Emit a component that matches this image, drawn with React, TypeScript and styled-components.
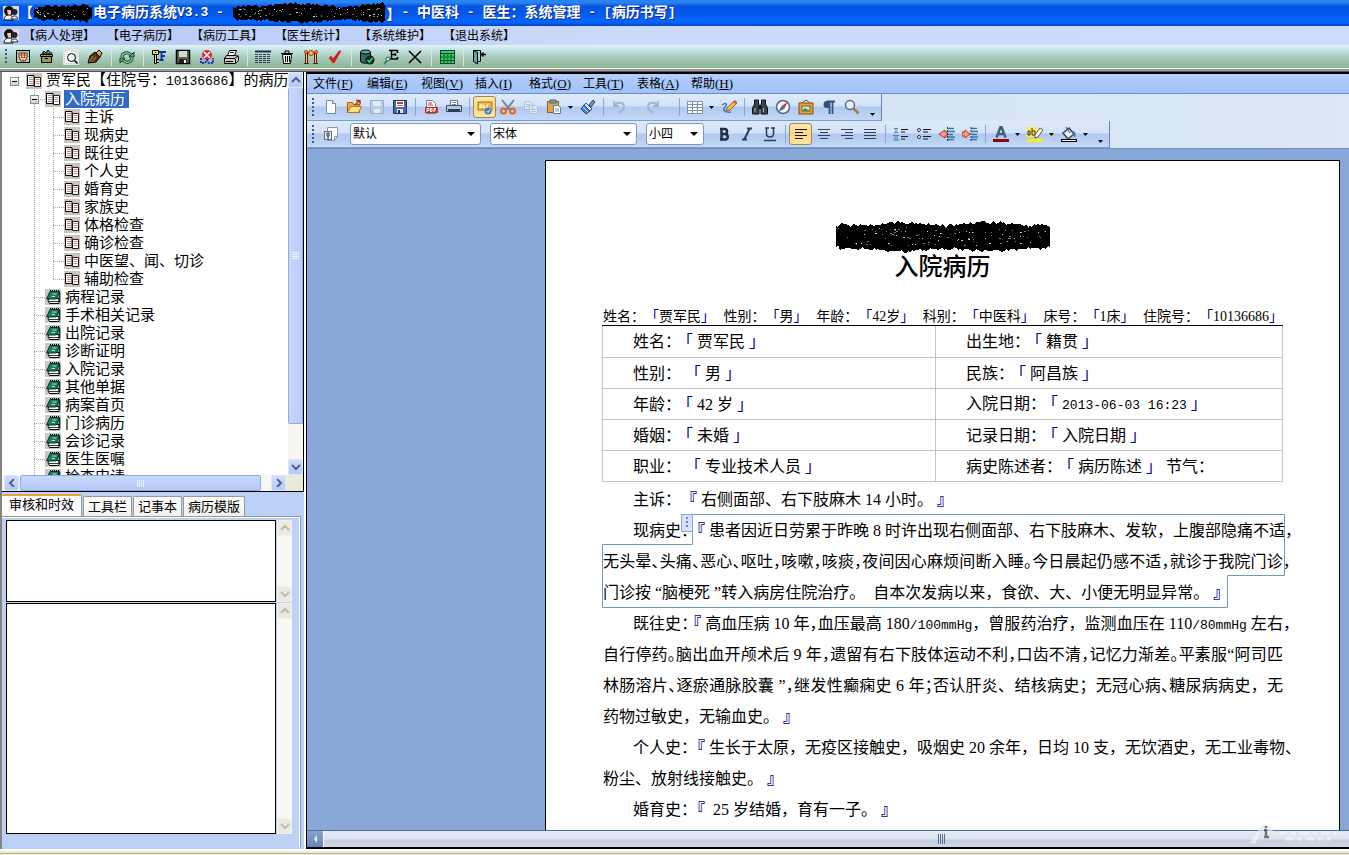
import React from 'react';
import styled, { createGlobalStyle, css } from 'styled-components';

const UI = '"Liberation Serif", "Noto Sans CJK SC", sans-serif';
const MONO = '"Liberation Mono", "Noto Sans CJK SC", monospace';

const Global = createGlobalStyle`
  * { box-sizing: border-box; }
  html, body { margin: 0; height: 100%; overflow: hidden; }
  body { font-family: ${UI}; font-size: 12px; color: #000; background: #bcd1f5; }
  button, select { font-family: inherit; color: inherit; }
  button { border: 0; padding: 0; background: none; cursor: default; }
  svg { display: block; flex: none; }
`;

const Shell = styled.div`
  height: 100vh;
  display: flex;
  flex-direction: column;
`;

/* ---------- title bar and main menu ---------- */

const TitleBar = styled.header`
  flex: none;
  height: 26px;
  padding-left: 3px;
  display: flex;
  align-items: center;
  color: #fff;
  font-size: 14px;
  font-weight: 700;
  white-space: pre;
  line-height: 20px;
  text-shadow: 1px 1px 0 #0a2a80;
  background: linear-gradient(#2a86f4 0, #2a80f0 3px, #0654e4 6px, #0458ea 13px, #0666ff 20px, #0562f8 23px, #0340c0 26px);
`;

const Latin = styled.span`
  font-family: ${MONO};
  font-size: 13px;
`;

const Half = styled.span<{ $ink?: string; $bold?: boolean }>`
  font-family: "Noto Sans CJK SC", sans-serif;
  font-feature-settings: "halt";
  font-weight: ${p => (p.$bold ? 700 : 'inherit')};
  color: ${p => p.$ink || 'inherit'};
`;

const TitleText = styled.span`
  display: flex;
  align-items: center;
`;

const MenuBar = styled.nav`
  flex: none;
  height: 19px;
  padding-left: 3px;
  display: flex;
  align-items: center;
  background: linear-gradient(90deg, #b4c8f6, #ccdaf9 45%, #ccdcfa);
`;

const MenuItem = styled.button`
  font-size: 12px;
  line-height: 18px;
  margin-right: 12px;
`;

const MenuIcon = styled.span`
  width: 20px;
`;

const MainTools = styled.div`
  flex: none;
  height: 24px;
  display: flex;
  align-items: center;
  background: linear-gradient(#e4f3f8 0, #c4e2e2 5px, #a6c9b8 13px, #8cb392 23px);
  border-bottom: 1px solid #f4f8ee;
`;

const Grip = styled.span<{ $h: number; $w: number }>`
  flex: none;
  width: ${p => p.$w}px;
  height: ${p => p.$h}px;
  background: repeating-linear-gradient(#3a5a94 0 2px, transparent 2px 4px) 5px 0 / 2px 100% no-repeat;
`;

const ToolButton = styled.button<{ $w: number; $on?: boolean }>`
  flex: none;
  width: ${p => p.$w}px;
  height: 22px;
  display: flex;
  align-items: center;
  justify-content: center;
  border-radius: 3px;
  ${p => p.$on && css`
    border: 1px solid #a08850;
    background: linear-gradient(#fce9b8, #ffd680 50%, #fbe6a8);
  `}
`;

const Separator = styled.span<{ $light?: boolean }>`
  flex: none;
  width: 8px;
  height: 18px;
  background: linear-gradient(${p => (p.$light ? '#d6e8d8, #d6e8d8' : '#8ba6d0, #8ba6d0')}) 4px 0 / 1px 100% no-repeat;
`;

const Edge = styled.div`
  flex: none;
  height: 3px;
  background: #9a9a9c;
  border-bottom: 1px solid #55555a;
`;

/* ---------- left column ---------- */

const Main = styled.main`
  flex: 1;
  min-height: 0;
  display: flex;
`;

const Side = styled.aside`
  flex: none;
  width: 306px;
  display: flex;
  flex-direction: column;
  border-left: 2px solid #85857c;
  border-right: 2px solid #fff;
  background: #bcd1f5;
`;

const TreePane = styled.section`
  flex: none;
  width: 302px;
  height: 420px;
  display: flex;
  flex-direction: column;
  background: #fff;
  border: solid #000;
  border-width: 0 1px 1px 0;
`;

const TreeTop = styled.div`
  flex: 1;
  min-height: 0;
  display: flex;
`;

const Tree = styled.ul`
  flex: 1;
  min-width: 0;
  overflow: hidden;
  margin: 0;
  padding: 0 0 0 2px;
  list-style: none;
  font-size: 15px;
`;

const TreeRow = styled.li`
  display: flex;
  align-items: center;
  height: 18px;
  line-height: 18px;
  white-space: nowrap;
`;

const DOTS_V = 'repeating-linear-gradient(#a8a8a8 0 1px, transparent 1px 2px)';
const DOTS_H = 'repeating-linear-gradient(90deg, #a8a8a8 0 1px, transparent 1px 2px)';

const Guide = styled.span<{ $w?: number; $v?: boolean; $h?: boolean; $last?: boolean }>`
  flex: none;
  width: ${p => p.$w || 19}px;
  height: 18px;
  display: flex;
  align-items: center;
  padding-left: ${p => (p.$w ? 6 : 4)}px;
  background-repeat: no-repeat;
  background-image: ${p => (p.$v ? DOTS_V : 'none')}, ${p => (p.$h ? DOTS_H : 'none')};
  background-size: 1px ${p => (p.$last ? '9px' : '100%')}, 11px 1px;
  background-position: 8px 0, 8px 9px;
`;

const Expander = styled.button`
  width: 9px;
  height: 9px;
  border: 1px solid #7c93a8;
  background: linear-gradient(#000, #000) 1px 3px / 5px 1px no-repeat, linear-gradient(#fff, #d4cfc4);
`;

const TreeLabel = styled.span<{ $on?: boolean }>`
  margin-left: 3px;
  padding: 0 4px 0 1px;
  ${p => p.$on && css`
    background: #316ac5;
    color: #fff;
  `}
`;

const TreeDigits = styled.span`
  font-family: ${MONO};
  font-size: 13px;
`;

const VScroll = styled.div<{ $off?: boolean }>`
  flex: none;
  width: 15px;
  display: flex;
  flex-direction: column;
  justify-content: space-between;
  background: ${p => (p.$off ? '#faf8f2' : '#f6f5f0')};
`;

const HScroll = styled.div`
  flex: none;
  height: 16px;
  display: flex;
  padding: 0 17px 0 2px;
  background: linear-gradient(90deg, #f8f7f4 272px, #ece9d8 272px);
`;

const ScrollButton = styled.button<{ $off?: boolean }>`
  flex: none;
  width: 15px;
  height: 16px;
  display: flex;
  align-items: center;
  justify-content: center;
  border: 1px solid ${p => (p.$off ? '#f2f0e8' : '#dce7fd')};
  border-radius: 2px;
  background: ${p => (p.$off ? '#eceade' : 'linear-gradient(#cfdcfd, #b6c9f6)')};
  color: ${p => (p.$off ? '#bdbab0' : '#4d6185')};
`;

const VThumb = styled.div`
  flex: none;
  width: 15px;
  height: 336px;
  margin-bottom: auto;
  display: flex;
  align-items: center;
  justify-content: center;
  border: 1px solid #93abdc;
  border-width: 0 1px 1px;
  border-radius: 2px;
  background: linear-gradient(90deg, #c8d8fd, #b9cdfb);
`;

const HThumb = styled.div`
  flex: 1;
  margin: 0 10px 0 1px;
  display: flex;
  align-items: center;
  justify-content: center;
  border: 1px solid #93abdc;
  border-radius: 2px;
  background: linear-gradient(#c8d8fd, #b4c8f8);
`;

const Tabs = styled.div`
  flex: none;
  display: flex;
  align-items: flex-end;
  height: 24px;
  gap: 1px;
`;

const Tab = styled.button<{ $on?: boolean }>`
  flex: none;
  height: ${p => (p.$on ? 22 : 20)}px;
  padding: 0 4px;
  font-size: 13px;
  line-height: 18px;
  border: 1px solid #919b9c;
  border-bottom: 0;
  border-radius: 2px 2px 0 0;
  background: linear-gradient(#fff, #f2f1ea);
  ${p => p.$on && css`
    padding: 0 7px 2px;
    border-top: 2px solid #e8a33a;
    border-left: 0;
    background: #fcfcfe;
  `}
`;

const TabPage = styled.section`
  flex: 1;
  min-height: 0;
  width: 299px;
  margin-bottom: 2px;
  padding: 3px 8px 13px 4px;
  display: flex;
  flex-direction: column;
  gap: 1px;
  border: 1px solid #919b9c;
  border-width: 1px 1px 0 0;
  box-shadow: inset 0 1px 0 #fff, inset -1px 0 0 #fff;
`;

const ListRow = styled.div<{ $h?: number }>`
  flex: ${p => (p.$h ? 'none' : '1')};
  height: ${p => (p.$h ? p.$h + 'px' : 'auto')};
  display: flex;
  gap: 1px;
`;

const ListBox = styled.div`
  flex: 1;
  background: #fff;
  border: 1px solid #000;
`;

/* ---------- editor ---------- */

const Editor = styled.section`
  flex: 1;
  min-width: 0;
  display: flex;
  flex-direction: column;
  border: solid #000;
  border-width: 2px 0 2px 1px;
`;

const EditorMenu = styled.nav`
  flex: none;
  height: 20px;
  padding-left: 6px;
  display: flex;
  align-items: center;
  background: linear-gradient(#b4cdfa, #9fc3fa);
  border-bottom: 1px solid #6c8cc4;
`;

const EditorMenuItem = styled.button`
  width: 54px;
  text-align: left;
  font-size: 12px;
  line-height: 18px;
  white-space: nowrap;
`;

const Mnemonic = styled.span`
  font-size: 13px;
`;

const Strip = styled.div`
  flex: none;
  height: 27px;
  display: flex;
  background: linear-gradient(90deg, #cfe0f4, #dbe7f4);
`;

const Band = styled.div`
  display: flex;
  align-items: center;
  background: linear-gradient(#dfeafa 0, #d2e2f8 12px, #b0c8ee 13px, #c4d8f6 26px);
  border-right: 1px solid #6684b4;
  border-bottom: 1px solid #7c9cd0;
`;

const DropArrow = styled.button<{ $w: number; $low?: boolean }>`
  flex: none;
  width: ${p => p.$w}px;
  height: 22px;
  padding-top: ${p => (p.$low ? 14 : 0)}px;
  display: flex;
  align-items: center;
  justify-content: center;
`;

const Picker = styled.label<{ $w: number; $gap?: boolean }>`
  position: relative;
  flex: none;
  width: ${p => p.$w}px;
  height: 22px;
  margin: 0 ${p => (p.$gap ? 8 : 1)}px 0 8px;
`;

const Select = styled.select`
  appearance: none;
  width: 100%;
  height: 22px;
  padding: 0 2px;
  font-size: 12px;
  background: #fff;
  border: 1px solid #7f97bf;
  border-radius: 3px;
`;

const PickerArrow = styled.span`
  position: absolute;
  right: 6px;
  top: 9px;
  pointer-events: none;
`;

const Desk = styled.div`
  flex: 1;
  min-height: 0;
  overflow: hidden;
  display: flex;
  justify-content: flex-end;
  align-items: flex-start;
  padding: 11px 9px 0 0;
  background: #88a8d8;
  border-top: 1px solid #6c8cc0;
`;

const Paper = styled.article`
  flex: none;
  width: 795px;
  min-height: 900px;
  padding: 60px 56px 0 56px;
  background: #fff;
  border: 1px solid #000;
  font-size: 16px;
`;

const Redacted = styled.div`
  display: flex;
  justify-content: center;
`;

const DocTitle = styled.h1`
  margin: 0;
  font-size: 24px;
  font-weight: 500;
  line-height: 28px;
  text-align: center;
`;

const DocHead = styled.div`
  display: flex;
  justify-content: space-between;
  margin-top: 26px;
  padding: 0 7px 0 1px;
  font-size: 14px;
  line-height: 17px;
  border-bottom: 1px solid #000;
  white-space: nowrap;
`;

const Facts = styled.table`
  width: 681px;
  margin-bottom: 1px;
  table-layout: fixed;
  border-collapse: collapse;

  td {
    height: 31px;
    padding: 0 0 0 30px;
    line-height: 24px;
    border: 1px solid #c4c4c4;
    border-top: 0;
    white-space: pre;
  }
  td:first-child { width: 333px; }
`;

const Slot = styled.span<{ $gap?: number }>`
  margin: 0 ${p => p.$gap || 0}px;
`;

const Para = styled.div`
  position: relative;
  width: 680px;
  margin-left: 1px;
`;

const Line = styled.div<{ $indent?: boolean; $full?: boolean; $hang?: boolean }>`
  height: 31px;
  line-height: 31px;
  width: ${p => (p.$hang ? 688 : 680)}px;
  padding-left: ${p => (p.$indent ? 30 : 0)}px;
  white-space: nowrap;
  text-align: left;
  text-align-last: ${p => (p.$full ? 'justify' : 'left')};
`;

const Unit = styled.span`
  font-family: ${MONO};
  font-size: 13px;
`;

const FieldFrame = styled.svg`
  position: absolute;
  left: -1px;
  top: 0;
`;

const BottomScroll = styled.div`
  flex: none;
  height: 17px;
  display: flex;
  position: relative;
  border-top: 1px solid #4c6c9c;
  background: linear-gradient(#88a4d0, #6484b8);
`;

const BottomButton = styled.button`
  width: 16px;
  display: flex;
  align-items: center;
  justify-content: center;
`;

const BottomThumb = styled.div`
  flex: 1;
  display: flex;
  align-items: center;
  justify-content: center;
  padding-left: 210px;
  background: linear-gradient(#e4eaf4 0, #dbe4f0 8px, #c4d0e0 9px, #ccd6e6 16px);
  border-left: 1px solid #fff;
`;

const Watermark = styled.div`
  position: absolute;
  right: 8px;
  top: -10px;
  pointer-events: none;
`;

const Foot = styled.footer`
  flex: none;
  height: 6px;
  background: linear-gradient(#fff 0 2px, #ece9d8 2px 4px, #b4b08c 4px 5px, #ece9d8 5px);
`;

/* ---------- drawings ---------- */

function rand(seed: number) {
  let s = seed;
  return () => {
    s = (s * 16807) % 2147483647;
    return s / 2147483647;
  };
}

function Scribble({ w, h, seed }: { w: number; h: number; seed: number }) {
  const r = rand(seed);
  const top: string[] = [];
  const bottom: string[] = [];
  for (let x = 1; x < w; x += 2) {
    const edge = x < 5 || x > w - 4 ? 3 : 0;
    const wave = Math.sin(x / 14) * 1.5 + 1.5;
    top.push(`${x},${Math.round(edge + wave + r() * 3)}`);
    bottom.unshift(`${x},${Math.round(h - edge - wave - r() * 3)}`);
  }
  const specks = Array.from({ length: Math.round(w * 0.5) }, () => [
    3 + Math.floor(r() * (w - 8)),
    6 + Math.floor(r() * (h - 13)),
    r() > 0.7 ? 2 : 1,
  ]);
  return (
    <svg width={w} height={h} shapeRendering="crispEdges">
      <polygon points={top.concat(bottom).join(' ')} fill="#000" />
      {specks.map((s, i) => (
        <rect key={i} x={s[0]} y={s[1]} width={s[2]} height="1" fill={i % 3 ? '#777' : '#ccc'} />
      ))}
    </svg>
  );
}

const K = '#000';
const doc = 'M3.5 1.5h6l3 3v10h-9z';

const icons: Record<string, React.ReactNode> = {
  avatar: (<>
    <rect x="0" y="1" width="16" height="14" fill="#d8dcea" /><circle cx="6" cy="6" r="5" fill="#111" /><path d="M4 5h4v5H5z" fill="#f2c8a8" />
    <path d="M1 15c0-4 3-5 5-5s4 1 4 5z" fill="#f4f4ff" stroke={K} /><circle cx="11.500" cy="7" r="3" fill="#223" /><path d="M8 14c1-4 6-4 7 0z" fill="#fff" stroke="#223" />
  </>),
  patient: (<>
    <rect x="1.500" y="1.500" width="13" height="12" fill="#9fd0b8" stroke={K} /><path d="M4 4h8v4l-2 4H6L4 8z" fill="#fbd8b8" stroke="#7a2010" /><path d="M5 6h6M6 8.500h4M7 11h2M6.500 4v5M9.500 4v5" stroke="#a02010" strokeWidth=".8" />
  </>),
  basket: (<>
    <path d="M3 5l2-3 2 2 2-3 4 4z" fill="#3aa0a0" stroke={K} /><path d="M1.500 5.500h12v2h-12zM2.500 7.500h10v6h-10z" fill="#9a9a40" stroke={K} /><path d="M6 9.500h3" stroke={K} /><path d="M10 3l3 1" stroke="#3050c0" strokeWidth="1.500" />
  </>),
  find: (<>
    <rect x="0" y="0" width="16" height="16" fill="#dfe6e0" /><path d="M2 2h10v12H2z" fill="#fff" stroke="#ccc" strokeDasharray="1 1" /><circle cx="8.500" cy="8.500" r="4" fill="#eef4f4" stroke={K} /><path d="M11.500 11.500l3 3" stroke={K} strokeWidth="1.500" />
  </>),
  brush: (<>
    <path d="M1 14l2-7 5-4 5 5-4 5z" fill="#5a3018" stroke={K} /><path d="M2 13l4-6M5 13l4-5" stroke="#c08850" /><path d="M9 4l3-3 3 3-2 4z" fill="#e0a848" stroke={K} />
  </>),
  refresh: (<>
    <path d="M3 8c0-4 6-6 9-2" fill="none" stroke="#103820" strokeWidth="3" /><path d="M3 8c0-4 6-6 9-2" fill="none" stroke="#78c898" strokeWidth="1.500" /><path d="M10 8h5V3z" fill="#58b080" stroke="#103820" />
    <path d="M13 9c0 4-6 6-9 2" fill="none" stroke="#103820" strokeWidth="3" /><path d="M13 9c0 4-6 6-9 2" fill="none" stroke="#78c898" strokeWidth="1.500" /><path d="M6 9H1v5z" fill="#58b080" stroke="#103820" />
  </>),
  keyF: (<>
    <path d="M1.500 1.500h6v4h-6z" fill="#f0e050" stroke={K} /><path d="M3.500 5.500h2v9h-2z" fill="#f0e050" stroke={K} /><path d="M6 10.500h2M6 13.500h2M4 3.500h1" stroke={K} /><path d="M8 3h7M10.500 3v8M10.500 7h3.500M8.500 11h4" stroke="#1030a0" strokeWidth="1.800" />
  </>),
  save: (<>
    <path d="M1.500 1.500h13v13h-13z" fill="#60684c" stroke={K} strokeWidth="1.500" /><rect x="4" y="2" width="8" height="6" fill="#d8dcd0" /><rect x="4" y="10" width="8" height="4" fill="#222" /><rect x="9" y="11" width="2" height="3" fill="#fff" />
  </>),
  cancel: (<>
    <circle cx="8" cy="6" r="5" fill="#e02838" /><path d="M5 3l6 6M11 3l-6 6" stroke="#fff" strokeWidth="1.500" /><path d="M2 9v5h4l2-3 2 3h4V9" fill="none" stroke="#2030c0" strokeWidth="2" strokeDasharray="2 1" />
  </>),
  print: (<>
    <path d="M4.500 6.500l2-5h7l-2 5z" fill="#fff" stroke={K} /><path d="M3.500 6.500h9l3 1v4l-3 3h-11v-5z" fill="#c4c8c0" stroke={K} /><path d="M1 9.500h11l3-3M12.500 10v4M7 3.500h4M3 12.500h7" stroke={K} fill="none" /><rect x="8" y="10" width="3" height="1" fill="#e8e060" />
  </>),
  grid: (<>
    <path d="M0 2.500h16" stroke="#202c50" strokeWidth="2" />
    {[5.5, 7.5, 9.5, 11.5, 13.5].map(y => <path key={y} d={`M0 ${y}h16`} stroke="#303c60" strokeDasharray="3 1" />)}
  </>),
  trash: (<>
    <path d="M3.500 5.500h9l-1 9h-7z" fill="#eef4ee" stroke={K} /><path d="M2 4.500h12M6 4V2h4v2M6.500 7v6M8.500 7v6M10.500 7v6" fill="none" stroke={K} />
  </>),
  gate: (<>
    <rect x="2.500" y="4.500" width="2" height="10" fill="#f0c070" stroke="#502010" /><rect x="11.500" y="4.500" width="2" height="10" fill="#f0c070" stroke="#502010" /><path d="M1 14.500h5M10 14.500h5" stroke="#502010" /><path d="M4 3.500h8" stroke="#a04010" /><circle cx="8" cy="4" r="2.500" fill="#f0c030" stroke="#b03020" /><circle cx="3" cy="3" r="1.500" fill="#f0a040" stroke="#a04020" /><circle cx="13" cy="3" r="1.500" fill="#f0a040" stroke="#a04020" />
  </>),
  check: <path d="M2 9l2-2 2 3 6-8 2 0-7 12H6z" fill="#e01818" stroke="#c01010" strokeWidth=".5" />,
  dbcheck: (<>
    <path d="M1.500 3v9c0 3 10 3 10 0V3" fill="#2c6870" stroke={K} /><ellipse cx="6.500" cy="3" rx="5" ry="2" fill="#60a0a0" stroke={K} /><circle cx="11" cy="11" r="4.500" fill="#082818" /><path d="M8.500 11l2 2 3-4" stroke="#40e080" strokeWidth="1.500" fill="none" />
  </>),
  findE: (<>
    <path d="M6 1.500h9M8.500 1v9M8 5.500h5M6 10h9M14.500 1v3M14.500 8v2M12.500 4v3" stroke={K} strokeWidth="1.500" /><circle cx="5" cy="10" r="2" fill="#c0f0e0" stroke="#306050" /><path d="M4 12l-3 3" stroke="#308868" strokeWidth="2" />
  </>),
  close: <path d="M2 2l12 12M14 2L2 14" stroke={K} strokeWidth="1.500" />,
  table: (<>
    <rect x="1.500" y="1.500" width="14" height="13" fill="#38d070" stroke="#064820" /><path d="M2 4.500h13M2 8h13M2 11.500h13" stroke="#064820" /><path d="M4 6.200h2M7.500 6.200h2M11 6.200h2M4 9.800h2M7.500 9.800h2M11 9.800h2M4 13h2M7.500 13h2M11 13h2" stroke="#064820" />
  </>),
  exit: (<>
    <path d="M2.500 1.500h7v11h-7z" fill="#b8ccc8" stroke={K} /><path d="M2.500 1.500l4 2v11.500l-4-2.500z" fill="#60a8a8" stroke={K} /><path d="M10.500 5.500h4.500M12.500 3.500l-2 2 2 2" stroke={K} fill="none" strokeWidth="1.500" />
  </>),
  new: <><path d={doc} fill="#fcfdff" stroke="#7888a0" /><path d="M9.500 1.500v3h3" fill="#dde6f4" stroke="#7888a0" /></>,
  open: <><path d="M1.500 3.500h5l1 2h6v8h-12z" fill="#f4a83c" stroke="#a86010" /><path d="M1.500 13.500l3-6h11l-3 6z" fill="#ffe080" stroke="#b07818" /><path d="M9 6l4-4M10 1.500h4v4" stroke="#c03010" strokeWidth="1.500" fill="none" /></>,
  saveOff: <><path d="M1.500 1.500h13v13h-13z" fill="#bccae4" stroke="#9cacc8" /><rect x="4" y="2" width="8" height="5" fill="#e4ebf6" /><rect x="5" y="10" width="6" height="4" fill="#e4ebf6" /></>,
  saveAs: <><path d="M1.500 1.500h13v13h-13z" fill="#4a6ca0" stroke="#203050" /><rect x="4" y="2" width="8" height="6" fill="#fff" /><path d="M5 4h6" stroke="#e03030" strokeWidth="2" /><path d="M5 6.500h6" stroke="#888" /><rect x="5" y="10" width="6" height="4" fill="#e0e4ea" /><rect x="6" y="11" width="2" height="3" fill="#203050" /></>,
  pdf: <><path d={doc} fill="#fff" stroke="#70809c" /><path d="M5 4h4M5 6h5" stroke="#c03030" /><rect x="2" y="8" width="13" height="6" fill="#c82828" /><path d="M4 13V9.500h2v2H4M7.500 9.500v3h1.500v-3zM11 13V9.500h2M11 11h2" stroke="#fff" fill="none" /></>,
  printer: <><path d="M4.500 7V1.500h7V7" fill="#fff" stroke="#607090" /><path d="M.5 6.500h15v6H.5z" fill="#b8c6d8" stroke="#3c4c68" /><rect x="2" y="10" width="12" height="3" fill="#2c4058" /><path d="M6 3.500h4M6 5.500h4" stroke="#58a078" /></>,
  spell: <><rect x="1" y="3" width="14" height="8" fill="#f4b840" stroke="#a87820" /><path d="M3 9V6h2v3M3 8h2M7 5.500v3h1.500M11 6h-1v3h1" stroke="#fff" fill="none" /><circle cx="11" cy="12" r="3.500" fill="#3c78d0" /><path d="M9.500 12l1.500 1.500 2-3" stroke="#fff" fill="none" /></>,
  cut: <><path d="M2 1l8 10M14 1L6 11" stroke="#708098" strokeWidth="2" /><circle cx="3.500" cy="12" r="2.500" fill="none" stroke="#e06818" strokeWidth="2" /><circle cx="12.500" cy="12" r="2.500" fill="none" stroke="#e06818" strokeWidth="2" /></>,
  copy: <><path d="M1.500 2.500h6l2 2v6h-8zM6.500 6.500h6l2 2v6h-8z" fill="#dfe8f6" stroke="#aebdd8" /><path d="M3 5.500h4M3 7.500h3M8 10.500h5M8 12.500h5" stroke="#aebdd8" /></>,
  paste: <><rect x="1.500" y="2.500" width="11" height="11" fill="#e0a840" stroke="#90641c" /><rect x="4" y="1" width="6" height="3" fill="#889ab4" stroke="#506080" /><path d="M7.500 6.500h5l2 2v6h-7z" fill="#fff" stroke="#5878a8" /><path d="M9 10h4M9 12h4" stroke="#7898c8" /></>,
  format: <><path d="M9 6l4-5 2 2-4 5z" fill="#6898d0" stroke="#284870" /><path d="M6 4l6 6-2 2-6-6z" fill="#d8e8fa" stroke="#305888" /><path d="M4 6l6 6-4 3-5-5z" fill="#4888d0" stroke="#204880" /><path d="M3 8l5 5" stroke="#b8d8ff" /></>,
  undo: <path d="M3 2v5h5M3 7c3-5 10-4 10 1 0 3-3 5-6 6" fill="none" stroke="#a3b5d4" strokeWidth="2" />,
  redo: <path d="M13 2v5H8M13 7C10 2 3 3 3 8c0 3 3 5 6 6" fill="none" stroke="#a3b5d4" strokeWidth="2" />,
  cells: <><path d="M.5 2.500h15v12H.5z" fill="#fff" stroke="#8090a8" /><path d="M.5 5.500h15M.5 8.500h15M.5 11.500h15M5.500 2v12M10.500 2v12" stroke="#8090a8" /></>,
  draw: <><path d="M6 9l7-7 3 2-7 7-4 1z" fill="#f0c048" stroke="#a06020" /><path d="M13 2l2 2" stroke="#e05050" strokeWidth="3" /><path d="M1 6c4-3 6-1 3 2s0 6 6 5" stroke="#3878c8" strokeWidth="1.500" fill="none" /></>,
  binoc: <><path d="M2.500 1h4v3l.5 2v9H.5V9l2-4zM9.500 1h4v4l2 4v6H9V6l.5-2z" fill="#38424c" stroke="#101418" /><path d="M7 6h2v4H7z" fill="#101418" /><path d="M3 9v4M11.500 9v4" stroke="#a8b8c0" /></>,
  compass: <><circle cx="8" cy="8" r="6.500" fill="#f4f8ff" stroke="#506888" strokeWidth="1.500" /><path d="M12.500 3L9.500 9.500 6.500 7z" fill="#e03028" /><path d="M3.500 13l3-6 3 2.500z" fill="#3060b0" /></>,
  frame: <><path d="M4 4l4-3 4 3" fill="none" stroke="#805018" /><rect x="1" y="4" width="14" height="11" fill="#e8a038" stroke="#80500c" /><rect x="4" y="7" width="8" height="5" fill="#d0ecd0" stroke="#706020" /><path d="M4 12l3-3 5 3z" fill="#40884c" /></>,
  pilcrow: <><path d="M8 2H6a3.500 3.500 0 000 7h2z" fill="#31517c" /><path d="M6 2.500h8M8.500 2v13M11.500 3v12" fill="none" stroke="#31517c" strokeWidth="1.800" /></>,
  zoom: <><circle cx="6" cy="6" r="4.500" fill="#e4f0fc" stroke="#607088" strokeWidth="1.500" /><path d="M9.500 9.500l5 5" stroke="#b07830" strokeWidth="2.500" /></>,
  style: <><path d="M4.500 1.500h10v9l-3 4h-7z" fill="#fff" stroke="#8094b4" /><path d="M11.500 14.500v-4h3" fill="none" stroke="#8094b4" /><rect x="1.500" y="5.500" width="7" height="8" fill="#e8ecf2" stroke="#606c80" /><path d="M4 7h2v3H4zM5 10v3" stroke="#303848" fill="none" /></>,
  bold: <path d="M4 3h4.500a2.500 2.500 0 010 5H5h4a2.700 2.700 0 010 5.500H4M5.500 3v10.500" fill="none" stroke="#203048" strokeWidth="2.500" />,
  italic: <path d="M8 2.500h5M3 13.500h5M10.500 3l-5 10" stroke="#28405c" strokeWidth="2" />,
  under: <path d="M3 2h4M9 2h4M4.500 2v6c0 4 7 4 7 0V2M2 14.500h12" fill="none" stroke="#28405c" strokeWidth="1.500" />,
  left: <path d="M2 3.500h12M2 6.500h8M2 9.500h12M2 12.500h8" stroke="#101820" strokeWidth="1" />,
  center: <path d="M2 3.500h12M4 6.500h8M2 9.500h12M4 12.500h8" stroke="#304058" />,
  right: <path d="M2 3.500h12M6 6.500h8M2 9.500h12M6 12.500h8" stroke="#304058" />,
  full: <path d="M2 3.500h12M2 6.500h12M2 9.500h12M2 12.500h12" stroke="#304058" />,
  numbers: <><path d="M1 2.500h4M3 2.500v4M1 6.500h4M0 9.500h6M2 10v4M4 10v4M0 14h6" stroke="#4888a8" /><path d="M8 3.500h7M8 6h4M8 10.500h7M8 13h4" stroke="#101820" /></>,
  bullets: <><circle cx="3" cy="4" r="1.500" fill="#fff" stroke="#203850" /><circle cx="3" cy="11" r="1.500" fill="#fff" stroke="#203850" /><path d="M7 3.500h8M7 6h5M7 10.500h8M7 13h5" stroke="#101820" /></>,
  outdent: <><path d="M9 2.500h6M9 13.500h6M9 5.500h7M9 8.500h5M9 11h7" stroke="#3878a0" strokeWidth="1.500" /><path d="M6 6V4L0 8l6 4v-2h2V6z" fill="#f4a088" stroke="#c03818" /><path d="M8.500 1v14" stroke="#203850" strokeDasharray="2 1" /></>,
  indent: <><path d="M9 2.500h6M9 13.500h6M9 5.500h7M10 8.500h5M9 11h7" stroke="#3878a0" strokeWidth="1.500" /><path d="M3 6V4l5 4-5 4v-2H0V6z" fill="#f4a088" stroke="#c03818" /><path d="M9 1v14" stroke="#203850" strokeDasharray="2 1" /></>,
  color: <><path d="M3.500 11.500L7.500 1h1l4 10.500M5.500 8h5" fill="none" stroke="#3c6078" strokeWidth="2.500" /><rect x="0" y="13" width="16" height="3" fill="#8c0808" /></>,
  mark: <><rect x="0" y="1" width="10" height="10" fill="#f8ee50" /><path d="M1 5h2v4H1zM5 2v7h3V5H5" fill="none" stroke="#303020" /><path d="M8 9l5-7 3 2-5 7-3 1z" fill="#fff" stroke="#605840" /><rect x="0" y="13" width="16" height="3" fill="#fff000" /></>,
  fill: <><path d="M2 7l6-5 5 6-6 5z" fill="#e8eef4" stroke="#304860" strokeWidth="1.500" /><path d="M5 1l4 6" stroke="#304860" /><path d="M12 5c3 1 3 4 2 7-1-2-2-4-2-7z" fill="#4070b0" /><rect x=".5" y="13.500" width="15" height="2" fill="#fff" stroke={K} /></>,
  pages: <><rect width="16" height="16" fill="#c8c4c0" /><path d="M8.500 4.500h6v9h-6z" fill="#fff" stroke="#301818" /><path d="M1.500 2.500h6.500v10h-6.500z" fill="#fff" stroke={K} /><path d="M3 4.500h4M3 6.500h4M3 8.500h4M3 10.500h4M9.500 6.500h4M9.500 8.500h4M9.500 10.500h4" stroke="#a87070" strokeWidth=".8" /></>,
  book: <><rect width="16" height="16" fill="#c8c8c4" /><path d="M4 9.500h10v5H4.500L3 12z" fill="#fff" stroke={K} /><path d="M4 12.500h10" stroke={K} strokeWidth=".8" /><path d="M5 2.500h9.500l-3 7.500H1.500z" fill="#187870" stroke="#04302c" /><path d="M14.500 3v10" stroke="#04302c" strokeWidth="1.500" /><path d="M7.500 5h4M6.500 7.500h3.500" stroke="#c8f040" /><path d="M5 1.500h10" stroke={K} strokeDasharray="1 1" /></>,
};

const Icon = ({ name }: { name: string }) => (
  <svg width="16" height="16" viewBox="0 0 16 16" aria-hidden="true">{icons[name]}</svg>
);

const Triangle = () => (
  <svg width="5" height="3" viewBox="0 0 5 3"><path d="M0 0h5L2.500 3z" fill="#000" /></svg>
);

const chevrons = {
  up: 'M1 6l4-4 4 4', down: 'M1 2l4 4 4-4', left: 'M7 0L3 4l4 4', right: 'M3 0l4 4-4 4',
};
const Chevron = ({ dir }: { dir: keyof typeof chevrons }) => (
  <svg width="10" height="8" viewBox="0 0 10 8"><path d={chevrons[dir]} fill="none" stroke="currentColor" strokeWidth="2" /></svg>
);

/* ---------- data ---------- */

const mainMenu = ['【病人处理】', '【电子病历】', '【病历工具】', '【医生统计】', '【系统维护】', '【退出系统】'];

const mainTools = [
  ['patient', 'basket', 'find', 'brush'], ['refresh'], ['keyF', 'save', 'cancel', 'print'],
  ['grid', 'trash', 'gate', 'check'], ['dbcheck', 'findE', 'close'], ['table'], ['exit'],
];

const editorMenu = [['文件', 'F'], ['编辑', 'E'], ['视图', 'V'], ['插入', 'I'], ['格式', 'O'], ['工具', 'T'], ['表格', 'A'], ['帮助', 'H']];

/* "|" is a separator, "v" the drop-down arrow of the button before it, "_" an arrow that is hidden while disabled */
const standardTools = 'new open saveOff saveAs | pdf printer | spell* cut copy paste v format | undo _ redo _ | cells v draw | binoc compass frame pilcrow zoom'.split(' ');
const formatTools = 'bold italic under | left* center right full | numbers bullets outdent indent | color v mark v fill v'.split(' ');

const sections = ['主诉', '现病史', '既往史', '个人史', '婚育史', '家族史', '体格检查', '确诊检查', '中医望、闻、切诊', '辅助检查'];
const records = ['病程记录', '手术相关记录', '出院记录', '诊断证明', '入院记录', '其他单据', '病案首页', '门诊病历', '会诊记录', '医生医嘱', '检查申请'];

const headFields = [['姓名', '贾军民'], ['性别', '男'], ['年龄', '42岁'], ['科别', '中医科'], ['床号', '1床'], ['住院号', '10136686']];

type Fact = [string, React.ReactNode, string?];

/* ---------- parts ---------- */

const Open = ({ double }: { double?: boolean }) => <Half $ink="#000080" $bold={double}>{double ? '『' : '「'}</Half>;
const Shut = ({ double }: { double?: boolean }) => <Half $ink="#000090" $bold={double}>{double ? '』' : '」'}</Half>;

const facts: [Fact, Fact][] = [
  [['姓名：', '贾军民'], ['出生地：', '籍贯']],
  [['性别：  ', '男'], ['民族：', '阿昌族']],
  [['年龄：', '42 岁'], ['入院日期：', <Unit>2013-06-03 16:23</Unit>]],
  [['婚姻：', '未婚'], ['记录日期：', '入院日期']],
  [['职业：  ', '专业技术人员'], ['病史陈述者：', '病历陈述', '  节气：']],
];

function ToolItems({ items }: { items: string[] }) {
  return (
    <>
      {items.map((t, i) => {
        if (t === '|') return <Separator key={i} />;
        if (t === '_') return <DropArrow key={i} $w={11} aria-label="历史" disabled />;
        if (t === 'v') return <DropArrow key={i} $w={11} aria-label="更多选项"><Triangle /></DropArrow>;
        const on = t.endsWith('*');
        const name = t.replace('*', '');
        return <ToolButton key={i} $w={23} $on={on} aria-label={name}><Icon name={name} /></ToolButton>;
      })}
    </>
  );
}

function FontPicker({ label, value, w, gap }: { label: string; value: string; w: number; gap?: boolean }) {
  return (
    <Picker $w={w} $gap={gap}>
      <Select aria-label={label} defaultValue={value}><option>{value}</option></Select>
      <PickerArrow><svg width="8" height="4" viewBox="0 0 8 4"><path d="M0 0h8L4 4z" /></svg></PickerArrow>
    </Picker>
  );
}

function FactCell({ fact }: { fact: Fact }) {
  return (
    <td>
      {fact[0]}<Slot $gap={4}><Open /></Slot>{fact[1]}<Slot $gap={4}><Shut /></Slot>{fact[2]}
    </td>
  );
}

const H = Half;
const nb = '\u00a0';

export default function App() {
  return (
    <Shell>
      <Global />
      <TitleBar>
        <Icon name="avatar" />
        <TitleText>【<Scribble w={60} h={22} seed={41} />电子病历系统<Latin>V3.3 - </Latin></TitleText>
        <Scribble w={155} h={22} seed={97} />
        <TitleText>
          <Half>】</Half><Latin> - </Latin>中医科<Latin> - </Latin>医生：系统管理<Latin> - [</Latin>病历书写<Latin>]</Latin>
        </TitleText>
      </TitleBar>
      <MenuBar>
        <MenuIcon><Icon name="avatar" /></MenuIcon>
        {mainMenu.map(m => <MenuItem key={m}>{m}</MenuItem>)}
      </MenuBar>
      <MainTools>
        <Grip $w={11} $h={15} />
        {mainTools.map((group, i) => (
          <React.Fragment key={i}>
            {i > 0 && <Separator $light />}
            {group.map(n => <ToolButton key={n} $w={24} aria-label={n}><Icon name={n} /></ToolButton>)}
          </React.Fragment>
        ))}
      </MainTools>
      <Edge />
      <Main>
        <Side>
          <TreePane>
            <TreeTop>
              <Tree>
                <TreeRow>
                  <Guide $w={22}><Expander aria-label="折叠" /></Guide>
                  <Icon name="pages" />
                  <TreeLabel>贾军民【住院号：<TreeDigits>10136686</TreeDigits>】的病历</TreeLabel>
                </TreeRow>
                <TreeRow>
                  <Guide $w={22} />
                  <Guide $v $h><Expander aria-label="折叠" /></Guide>
                  <Icon name="pages" />
                  <TreeLabel $on>入院病历</TreeLabel>
                </TreeRow>
                {sections.map((s, i) => (
                  <TreeRow key={s}>
                    <Guide $w={22} />
                    <Guide $v />
                    <Guide $v $h $last={i === sections.length - 1} />
                    <Icon name="pages" />
                    <TreeLabel>{s}</TreeLabel>
                  </TreeRow>
                ))}
                {records.map(s => (
                  <TreeRow key={s}>
                    <Guide $w={22} />
                    <Guide $v $h />
                    <Icon name="book" />
                    <TreeLabel>{s}</TreeLabel>
                  </TreeRow>
                ))}
              </Tree>
              <VScroll>
                <ScrollButton aria-label="向上滚动"><Chevron dir="up" /></ScrollButton>
                <VThumb><svg width="7" height="7"><path d="M0 .5h7M0 2.500h7M0 4.500h7M0 6.500h7" stroke="#eef4ff" /></svg></VThumb>
                <ScrollButton aria-label="向下滚动"><Chevron dir="down" /></ScrollButton>
              </VScroll>
            </TreeTop>
            <HScroll>
              <ScrollButton aria-label="向左滚动"><Chevron dir="left" /></ScrollButton>
              <HThumb><svg width="8" height="7"><path d="M.5 0v7M2.500 0v7M4.500 0v7M6.500 0v7" stroke="#eef4ff" /></svg></HThumb>
              <ScrollButton aria-label="向右滚动"><Chevron dir="right" /></ScrollButton>
            </HScroll>
          </TreePane>
          <Tabs role="tablist">
            {['审核和时效', '工具栏', '记事本', '病历模版'].map((t, i) => (
              <Tab key={t} role="tab" aria-selected={i === 0} $on={i === 0}>{t}</Tab>
            ))}
          </Tabs>
          <TabPage>
            {[82, 0].map(h => (
              <ListRow key={h} $h={h}>
                <ListBox />
                <VScroll $off>
                  <ScrollButton $off aria-label="向上滚动"><Chevron dir="up" /></ScrollButton>
                  <ScrollButton $off aria-label="向下滚动"><Chevron dir="down" /></ScrollButton>
                </VScroll>
              </ListRow>
            ))}
          </TabPage>
        </Side>
        <Editor>
          <EditorMenu>
            {editorMenu.map(([t, k]) => (
              <EditorMenuItem key={k}>{t}<Mnemonic>(<u>{k}</u>)</Mnemonic></EditorMenuItem>
            ))}
          </EditorMenu>
          <Strip>
            <Band>
              <Grip $w={12} $h={18} />
              <ToolItems items={standardTools} />
              <DropArrow $w={18} $low aria-label="工具栏选项"><Triangle /></DropArrow>
            </Band>
          </Strip>
          <Strip>
            <Band>
              <Grip $w={12} $h={18} />
              <ToolItems items={['style']} />
              <FontPicker label="样式" value="默认" w={131} />
              <FontPicker label="字体" value="宋体" w={147} />
              <FontPicker label="字号" value="小四" w={58} gap />
              <ToolItems items={formatTools} />
              <DropArrow $w={18} $low aria-label="工具栏选项"><Triangle /></DropArrow>
            </Band>
          </Strip>
          <Desk>
            <Paper>
              <Redacted><Scribble w={216} h={32} seed={1234} /></Redacted>
              <DocTitle>入院病历</DocTitle>
              <DocHead>
                {headFields.map(([k, v]) => (
                  <span key={k}>{k}：{nb}{nb}<Open />{v}<Shut /></span>
                ))}
              </DocHead>
              <Facts>
                <tbody>
                  {facts.map(([a, b]) => (
                    <tr key={a[0]}><FactCell fact={a} /><FactCell fact={b} /></tr>
                  ))}
                </tbody>
              </Facts>
              <Para>
                <Line $indent>主诉：{nb}{nb}<Open double /> 右侧面部、右下肢麻木 14 小时。 <Shut double /></Line>
              </Para>
              <Para>
                <Line $indent $full $hang>现病史<H>：</H> {nb}<Open double /> 患者因近日劳累于昨晚 8 时许出现右侧面部、右下肢麻木、发软，上腹部隐痛不适<H>，</H></Line>
                <Line $full $hang>无头晕<H>、</H>头痛<H>、</H>恶心<H>、</H>呕吐<H>，</H>咳嗽<H>，</H>咳痰<H>，</H>夜间因心麻烦间断入睡<H>。</H>今日晨起仍感不适<H>，</H>就诊于我院门诊<H>，</H></Line>
                <Line>门诊按 “脑梗死 ”转入病房住院治疗。{nb}{nb}自本次发病以来，食欲、大、小便无明显异常。 <Shut double /></Line>
                <FieldFrame width="684" height="95" aria-hidden="true">
                  <path d="M90.500 .5H682.500V61.500H625.500V93.500H.5V30.500H90.500z" fill="none" stroke="#6f9bb8" />
                  <rect x="79.500" y=".5" width="11" height="17" fill="#d3e4fa" stroke="#8aaad0" />
                  <path d="M84 4h2M84 8h2M84 12h2" stroke="#6888c0" strokeWidth="2" />
                </FieldFrame>
              </Para>
              <Para>
                <Line $indent $full $hang>既往史<H>：</H>{nb}<Open double /> 高血压病 10 年<H>，</H>血压最高 180<Unit>/100mmHg</Unit>，曾服药治疗，监测血压在 110<Unit>/80mmHg</Unit> 左右<H>，</H></Line>
                <Line $full>自行停药<H>。</H>脑出血开颅术后 9 年<H>，</H>遗留有右下肢体运动不利<H>，</H>口齿不清<H>，</H>记忆力渐差<H>。</H>平素服“阿司匹</Line>
                <Line $full>林肠溶片<H>、</H>逐瘀通脉胶囊 ”<H>，</H>继发性癫痫史 6 年<H>；</H>否认肝炎、结核病史；无冠心病<H>、</H>糖尿病病史，无</Line>
                <Line>药物过敏史，无输血史。 <Shut double /></Line>
              </Para>
              <Para>
                <Line $indent $full $hang>个人史<H>：</H>{nb}{nb}<Open double /> 生长于太原，无疫区接触史，吸烟史 20 余年，日均 10 支，无饮酒史，无工业毒物<H>、</H></Line>
                <Line>粉尘、放射线接触史。 <Shut double /></Line>
              </Para>
              <Para>
                <Line $indent>婚育史<H>：</H>{nb}{nb}<Open double />{nb}{nb}25 岁结婚，育有一子。 <Shut double /></Line>
              </Para>
            </Paper>
          </Desk>
          <BottomScroll>
            <BottomButton aria-label="向左滚动"><svg width="3" height="8"><path d="M3 0v8L0 4z" fill="#e8eef8" /></svg></BottomButton>
            <BottomThumb><svg width="8" height="10"><path d="M.5 0v10M2.500 0v10M4.500 0v10M6.500 0v10" stroke="#5a7090" /></svg></BottomThumb>
            <Watermark>
              <svg width="92" height="24" viewBox="0 0 92 24" opacity=".7">
                <path d="M1 22l9-14 3 1-7 14z" fill="#f4f6fa" /><circle cx="17" cy="11" r="7" fill="#e6e8ea" />
                <path d="M17 5v2M15 9h2v7M15 16h5" stroke="#444" strokeWidth="2.500" fill="none" />
                <path d="M30 12h58M36 18h46" stroke="#f4f7fb" strokeWidth="3" strokeDasharray="9 3 5 4" />
              </svg>
            </Watermark>
          </BottomScroll>
        </Editor>
      </Main>
      <Foot />
    </Shell>
  );
}
